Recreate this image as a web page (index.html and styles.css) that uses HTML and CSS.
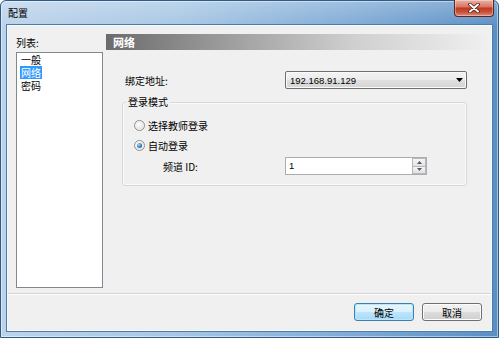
FILE: index.html
```html
<!DOCTYPE html>
<html>
<head>
<meta charset="utf-8">
<link rel="stylesheet" href="styles.css">
</head>
<body>
<div class="window">
  <div class="titlebar">
    <span class="title">配置</span>
    <div class="close">
      <svg width="12" height="10" viewBox="0 0 12 10">
        <path d="M2 1.5 L10 8.5 M10 1.5 L2 8.5" stroke="#4a1d16" stroke-width="3.6" stroke-linecap="round"/>
        <path d="M2 1.5 L10 8.5 M10 1.5 L2 8.5" stroke="#ffffff" stroke-width="2" stroke-linecap="round"/>
      </svg>
    </div>
  </div>
  <div class="client">
    <div class="main">
      <div class="left">
        <div class="lbl">列表:</div>
        <div class="listbox">
          <div class="item">一般</div>
          <div class="item sel">网络</div>
          <div class="item">密码</div>
        </div>
      </div>
      <div class="right">
        <div class="header">网络</div>
        <div class="bind">
          <span class="bind-lbl">绑定地址:</span>
          <div class="combo">
            <span class="combo-val">192.168.91.129</span>
            <svg class="arrow" width="7" height="4" viewBox="0 0 7 4"><path d="M0 0 H7 L3.5 4 Z" fill="#000"/></svg>
          </div>
        </div>
        <div class="group">
          <div class="legend">登录模式</div>
          <div class="radio-row first">
            <span class="radio"></span>
            <span class="rtext">选择教师登录</span>
          </div>
          <div class="radio-row">
            <span class="radio checked"><span class="dot"></span></span>
            <span class="rtext">自动登录</span>
          </div>
          <div class="spin-row">
            <span class="spin-lbl">频道 ID:</span>
            <div class="spin">
              <span class="spin-val">1</span>
              <div class="spin-btns">
                <div class="sb"><svg width="5" height="3" viewBox="0 0 5 3"><path d="M0 3 L2.5 0 L5 3 Z" fill="#505a66"/></svg></div>
                <div class="sb"><svg width="5" height="3" viewBox="0 0 5 3"><path d="M0 0 L5 0 L2.5 3 Z" fill="#505a66"/></svg></div>
              </div>
            </div>
          </div>
        </div>
      </div>
    </div>
    <div class="sep"></div>
    <div class="buttons">
      <div class="btn default">确定</div>
      <div class="btn">取消</div>
    </div>
  </div>
</div>
</body>
</html>
```
FILE: styles.css
```css
* { box-sizing: border-box; }
html, body { margin: 0; padding: 0; background: #ffffff; }
body {
  width: 499px;
  height: 338px;
  overflow: hidden;
  font-family: "Noto Sans CJK SC", "Noto Sans", sans-serif;
  font-size: 10px;
  color: #000;
}
.window {
  width: 499px;
  height: 338px;
  display: flex;
  flex-direction: column;
  border: 1px solid #2f5b88;
  border-radius: 6px 6px 0 0;
  background:
    linear-gradient(rgba(255,255,255,0.25), rgba(255,255,255,0) 26px),
    linear-gradient(to right, #bcd3ea 0%, #a8c7e4 35%, #80abd6 70%, #5a8fc4 100%);
  box-shadow: inset 0 0 0 1px rgba(255,255,255,0.45);
}
.titlebar {
  height: 24px;
  display: flex;
  align-items: flex-start;
  padding-left: 7px;
  flex: none;
}
.title {
  margin-top: 5px;
  line-height: 14px;
  font-size: 10px;
  color: #000;
}
.close {
  margin-left: auto;
  margin-right: 4px;
  margin-top: -1px;
  width: 40px;
  height: 17px;
  border: 1px solid #5a2820;
  border-top: none;
  border-radius: 0 0 4px 4px;
  background: linear-gradient(#eab0a4 0%, #d97b6a 40%, #c2391f 52%, #c9503a 75%, #dd8d78 100%);
  box-shadow: inset 0 0 0 1px rgba(255,255,255,0.35);
  display: flex;
  align-items: center;
  justify-content: center;
}
.client {
  flex: 1;
  margin: 0 6px 6px 6px;
  border: 1px solid #f6f9fc;
  box-shadow: 0 0 0 1px #4f7dab;
  background: #f0f0f0;
  display: flex;
  flex-direction: column;
  padding-top: 8px;
}
.main {
  display: flex;
  height: 254px;
  padding: 0 6px 0 8px;
  gap: 3px;
}
.left {
  width: 87px;
  display: flex;
  flex-direction: column;
}
.lbl {
  height: 18px;
  line-height: 17px;
}
.listbox {
  height: 236px;
  border: 1px solid #828790;
  background: #fff;
  padding: 0 3px;
}
.item {
  width: fit-content;
  line-height: 13px;
  padding: 0 1px;
}
.item.sel {
  background: #3399ff;
  color: #fff;
}
.right {
  flex: 1;
  display: flex;
  flex-direction: column;
}
.header {
  height: 16px;
  line-height: 16px;
  padding-left: 7px;
  font-size: 11px;
  font-weight: bold;
  color: #fff;
  background: linear-gradient(to right, #6b6b6b 0%, #9a9a9a 30%, #cfcfcf 65%, #efefef 100%);
}
.bind {
  display: flex;
  align-items: center;
  height: 18px;
  margin: 21px 18px 0 19px;
}
.bind-lbl {
  width: 160px;
  flex: none;
}
.combo {
  width: 182px;
  height: 18px;
  border: 1px solid #707070;
  border-radius: 2px;
  background: linear-gradient(#f3f3f3 0%, #ececec 50%, #e0e0e0 50%, #d4d4d4 100%);
  box-shadow: inset 0 0 0 1px #fafafa;
  display: flex;
  align-items: center;
  padding: 0 3px 0 4px;
  font-family: "Liberation Sans", Arial, sans-serif;
  font-size: 9.5px;
}
.combo-val { flex: 1; }
.arrow { flex: none; }
.group {
  margin: 13px 18px 0 16px;
  border: 1px solid #d5d9dd;
  border-radius: 3px;
  box-shadow: inset 0 0 0 1px #fbfbfb;
  padding-bottom: 9px;
}
.legend {
  width: fit-content;
  margin: -7px 0 0 3px;
  padding: 0 2px;
  line-height: 12px;
  background: #f0f0f0;
}
.radio-row {
  height: 20px;
  display: flex;
  align-items: center;
  padding-left: 11px;
}
.radio-row.first { margin-top: 7px; }
.radio {
  width: 11px;
  height: 11px;
  flex: none;
  border-radius: 50%;
  border: 1px solid #8e8f8f;
  background: radial-gradient(circle at 40% 35%, #ffffff 0%, #e8e8e8 55%, #cfcfcf 100%);
  box-shadow: inset 0 0 0 1px #f2f2f2;
  display: flex;
  align-items: center;
  justify-content: center;
}
.dot {
  width: 5px;
  height: 5px;
  border-radius: 50%;
  background: radial-gradient(circle at 35% 35%, #a6dcfb 0%, #3b86c8 50%, #164d86 100%);
}
.rtext { margin-left: 3px; }
.spin-row {
  margin-top: 1px;
  height: 20px;
  display: flex;
  align-items: center;
}
.spin-lbl {
  width: 162px;
  flex: none;
  padding-left: 40px;
}
.spin {
  width: 142px;
  height: 18px;
  border: 1px solid #abadb3;
  background: #fff;
  display: flex;
}
.spin-val {
  flex: 1;
  padding-left: 3px;
  line-height: 16px;
  font-family: "Liberation Sans", Arial, sans-serif;
  font-size: 9.5px;
}
.spin-btns {
  width: 14px;
  display: flex;
  flex-direction: column;
}
.sb {
  flex: 1;
  border: 1px solid #b8b8b8;
  background: linear-gradient(#f6f6f6, #e2e2e2);
  display: flex;
  align-items: center;
  justify-content: center;
}
.sb + .sb { border-top: none; }
.sep {
  margin-top: 5px;
  border-top: 1px solid #d5d5d5;
  border-bottom: 1px solid #ffffff;
}
.buttons {
  display: flex;
  justify-content: flex-end;
  gap: 8px;
  padding: 8px 9px 0 0;
}
.btn {
  width: 60px;
  height: 18px;
  border: 1px solid #707070;
  border-radius: 3px;
  background: linear-gradient(#f2f2f2 0%, #ebebeb 50%, #dddddd 50%, #cfcfcf 100%);
  box-shadow: inset 0 0 0 1px #fcfcfc;
  display: flex;
  align-items: center;
  justify-content: center;
}
.btn.default {
  border-color: #3c7fb1;
  background: linear-gradient(#eaf6fd 0%, #d9f0fc 50%, #bee6fd 50%, #a7d9f5 100%);
  box-shadow: inset 0 0 0 1px #b9e6fb;
}
```
